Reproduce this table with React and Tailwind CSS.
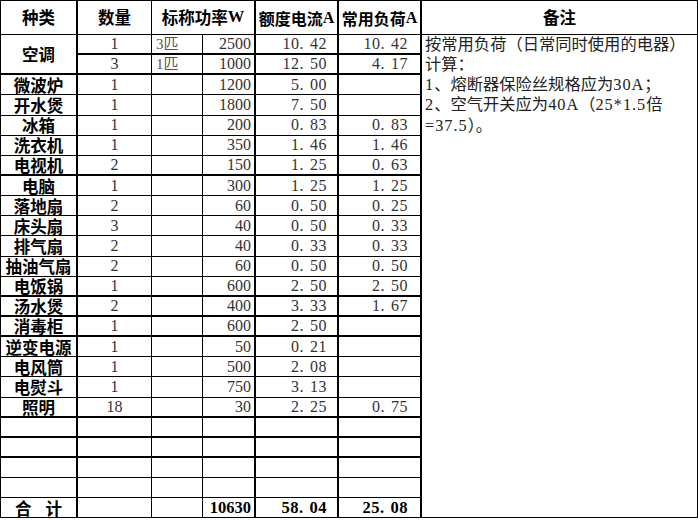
import React from "react";

const data = [
  ["微波炉", "1", "", "1200", "5.00", ""],
  ["开水煲", "1", "", "1800", "7.50", ""],
  ["冰箱", "1", "", "200", "0.83", "0.83"],
  ["洗衣机", "1", "", "350", "1.46", "1.46"],
  ["电视机", "2", "", "150", "1.25", "0.63"],
  ["电脑", "1", "", "300", "1.25", "1.25"],
  ["落地扇", "2", "", "60", "0.50", "0.25"],
  ["床头扇", "3", "", "40", "0.50", "0.33"],
  ["排气扇", "2", "", "40", "0.33", "0.33"],
  ["抽油气扇", "2", "", "60", "0.50", "0.50"],
  ["电饭锅", "1", "", "600", "2.50", "2.50"],
  ["汤水煲", "2", "", "400", "3.33", "1.67"],
  ["消毒柜", "1", "", "600", "2.50", ""],
  ["逆变电源", "1", "", "50", "0.21", ""],
  ["电风筒", "1", "", "500", "2.08", ""],
  ["电熨斗", "1", "", "750", "3.13", ""],
  ["照明", "18", "", "30", "2.25", "0.75"],
  ["", "", "", "", "", ""],
  ["", "", "", "", "", ""],
  ["", "", "", "", "", ""],
  ["", "", "", "", "", ""],
];

const thick = new Set([0, 1, 6, 12, 13, 14, 18, 19, 20]);

function Dec({ v }) {
  if (!v) return null;
  const [a, b] = v.split(".");
  return (
    <span className="tracking-[0.5px]">
      {a}.<span className="ml-[6px]">{b}</span>
    </span>
  );
}

const serif = "font-['Liberation_Serif','Noto_Sans_CJK_SC',serif]";

function Row({ r, i, withName = true }) {
  const bb = thick.has(i) ? "border-b-2" : "border-b";
  return (
    <>
      {withName && (
        <div className={`${bb} border-r-2 border-black flex items-center justify-center font-bold text-[16.5px] leading-[16px] text-black whitespace-nowrap`}>
          {r[0]}
        </div>
      )}
      <div className={`${bb} border-r border-black flex items-center justify-center ${serif} text-[16px] leading-[16px] text-[#333]`}>
        {r[1]}
      </div>
      <div className={`${bb} border-r border-black flex items-center pl-[4px] ${serif} text-[15px] leading-[16px] text-[#555]`}>
        {r[2]}
      </div>
      <div className={`${bb} border-r-2 border-black flex items-center justify-end pr-[3px] ${serif} text-[16px] leading-[16px] text-[#333]`}>
        {r[3]}
      </div>
      <div className={`${bb} border-r-2 border-black flex items-center justify-end pr-[10px] ${serif} text-[16px] leading-[16px] text-[#333]`}>
        <Dec v={r[4]} />
      </div>
      <div className={`${bb} border-r-2 border-black flex items-center justify-end pr-[12px] ${serif} text-[16px] leading-[16px] text-[#333]`}>
        <Dec v={r[5]} />
      </div>
    </>
  );
}

function L({ children }) {
  return <span className="tracking-[1px]">{children}</span>;
}

export default function App() {
  return (
    <div className="w-[698px] h-[520px] bg-white overflow-hidden font-['Noto_Sans_CJK_SC',sans-serif]">
      <div className="grid grid-cols-[77px_74px_51px_53px_83px_83px_276px] grid-rows-[34px_repeat(24,20.15px)] border-l border-t border-black">
        {/* header */}
        <div className="border-b border-r-2 border-black flex items-center justify-center font-bold text-[16.5px] leading-none">种类</div>
        <div className="border-b border-r border-black flex items-center justify-center font-bold text-[16.5px] leading-none">数量</div>
        <div className="col-span-2 border-b border-r-2 border-black flex items-center justify-center font-bold text-[16.5px] leading-none">
          标称功率<span className={`${serif} font-bold`}>W</span>
        </div>
        <div className="border-b border-r-2 border-black flex items-center justify-center font-bold text-[16px] leading-none whitespace-nowrap">
          额度电流<span className={`${serif} font-bold`}>A</span>
        </div>
        <div className="border-b border-r-2 border-black flex items-center justify-center font-bold text-[16px] leading-none whitespace-nowrap">
          常用负荷<span className={`${serif} font-bold`}>A</span>
        </div>
        <div className="border-b border-r border-black flex items-center justify-center font-bold text-[16.5px] leading-none">备注</div>

        {/* 空调 row 1 */}
        <div className="row-span-2 border-b-2 border-r-2 border-black flex items-center justify-center font-bold text-[16.5px] leading-none">空调</div>
        <Row r={["", "1", "3匹", "2500", "10.42", "10.42"]} i={0} withName={false} />
        <div className="row-span-24 border-b border-r border-black pl-[3px] pt-0 text-[16.3px] leading-[20.15px] text-[#222] font-['Liberation_Serif','Noto_Sans_CJK_SC',sans-serif] whitespace-nowrap">
          <div>按常用负荷（日常同时使用的电器）</div>
          <div>计算：</div>
          <div><L>1</L>、熔断器保险丝规格应为<L>30A</L>；</div>
          <div><L>2</L>、空气开关应为<L>40A</L>（<L>25*1.5</L>倍</div>
          <div><L>=37.5</L>）。</div>
        </div>
        <Row r={["", "3", "1匹", "1000", "12.50", "4.17"]} i={1} withName={false} />

        {data.map((r, k) => (
          <Row key={k} r={r} i={k + 2} />
        ))}

        {/* total */}
        <div className="border-b border-r-2 border-black flex items-center justify-center font-bold text-[16.5px] leading-[16px] gap-[14px]">
          <span>合</span>
          <span>计</span>
        </div>
        <div className="border-b border-r border-black"></div>
        <div className="border-b border-r border-black"></div>
        <div className={`border-b border-r-2 border-black flex items-center justify-end pr-[3px] ${serif} font-bold text-[16.5px] leading-[16px] text-black`}>
          10630
        </div>
        <div className={`border-b border-r-2 border-black flex items-center justify-end pr-[10px] ${serif} font-bold text-[16.5px] leading-[16px] text-black`}>
          <Dec v="58.04" />
        </div>
        <div className={`border-b border-r-2 border-black flex items-center justify-end pr-[12px] ${serif} font-bold text-[16.5px] leading-[16px] text-black`}>
          <Dec v="25.08" />
        </div>
      </div>
    </div>
  );
}
